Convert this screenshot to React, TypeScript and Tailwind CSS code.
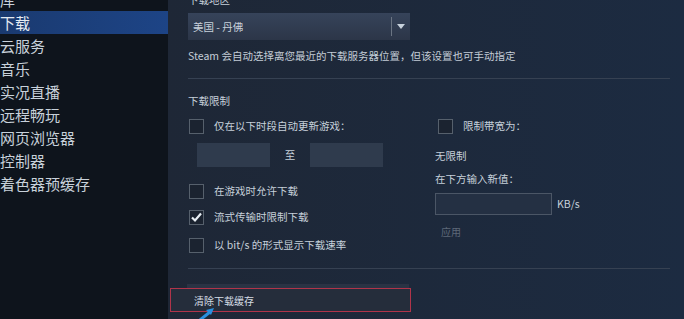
import React from "react";

const font = { fontFamily: '"Noto Sans CJK SC", "Noto Sans", sans-serif' };

function Box({ checked = false }: { checked?: boolean }) {
  return (
    <div className="w-[15px] h-[15px] border border-[#56606c] bg-[#1b2330] flex items-center justify-center shrink-0">
      {checked && (
        <svg width="13" height="13" viewBox="0 0 13 13">
          <path d="M2 6.5 L5 9.5 L11 2.5" stroke="#e8eef3" strokeWidth="2.2" fill="none" />
        </svg>
      )}
    </div>
  );
}

export default function App() {
  const side = ["库", "下载", "云服务", "音乐", "实况直播", "远程畅玩", "网页浏览器", "控制器", "着色器预缓存"];
  return (
    <div className="w-[684px] h-[319px] overflow-hidden flex bg-[#1d2635]" style={font}>
      <div className="w-[168px] h-full bg-[#0e141c] overflow-hidden shrink-0">
        <div className="-mt-[12px] flex flex-col">
          {side.map((s, i) => (
            <div
              key={s}
              className={
                "h-[23px] leading-[23px] text-[15px] text-[#c8d1da] whitespace-nowrap " +
                (i === 1 ? "bg-gradient-to-r from-[#1a3a70] to-[#1d4486] text-[#e4ebf2]" : "")
              }
            >
              {s}
            </div>
          ))}
        </div>
      </div>
      <div className="flex-1 h-full relative bg-gradient-to-r from-[#1e2736] to-[#1c2b41] pl-[20px] pr-[14px] text-[#c6d0da] text-[10.5px]">
        <div className="-mt-[9px] leading-[18px] text-[#c6d0da]">下载地区</div>
        <div className="mt-[4px] w-[222px] h-[27px] bg-gradient-to-b from-[#36435a] to-[#2c3648] flex items-center">
          <div className="flex-1 pl-[5px] text-[#c8d2dc]">美国 - 丹佛</div>
          <div className="w-[1px] h-[19px] bg-[#6b7583]" />
          <div className="w-[18px] flex justify-center">
            <svg width="8" height="5" viewBox="0 0 8 5"><path d="M0 0 L8 0 L4 5 Z" fill="#c8d2dc" /></svg>
          </div>
        </div>
        <div className="mt-[8px] leading-[16px] text-[#c3ccd6]">Steam 会自动选择离您最近的下载服务器位置，但该设置也可手动指定</div>
        <div className="mt-[14px] h-[1px] bg-[#364152] w-[482px]" />
        <div className="mt-[13px] leading-[18px]">下载限制</div>
        <div className="flex mt-[8px]">
          <div className="w-[249px]">
            <div className="flex items-center gap-[10px] ml-[1px] h-[16px]">
              <Box />
              <span>仅在以下时段自动更新游戏：</span>
            </div>
            <div className="flex items-center mt-[9px] ml-[9px] h-[24px]">
              <div className="w-[73px] h-[24px] bg-[#2f3b4d]" />
              <div className="w-[40px] text-center">至</div>
              <div className="w-[73px] h-[24px] bg-[#2f3b4d]" />
            </div>
            <div className="flex items-center gap-[10px] ml-[1px] mt-[16px] h-[16px]">
              <Box />
              <span>在游戏时允许下载</span>
            </div>
            <div className="flex items-center gap-[10px] ml-[1px] mt-[10px] h-[16px]">
              <Box checked />
              <span>流式传输时限制下载</span>
            </div>
            <div className="flex items-center gap-[10px] ml-[1px] mt-[12px] h-[16px]">
              <Box />
              <span>以 bit/s 的形式显示下载速率</span>
            </div>
          </div>
          <div>
            <div className="flex items-center gap-[10px] ml-[1px] h-[16px]">
              <Box />
              <span>限制带宽为：</span>
            </div>
            <div className="mt-[14px] leading-[16px] -ml-[2px]">无限制</div>
            <div className="mt-[7px] leading-[16px] -ml-[2px]">在下方输入新值：</div>
            <div className="flex items-center mt-[6px] -ml-[2px]">
              <div className="w-[117px] h-[22px] border border-[#4b5666] bg-[#243043]" />
              <span className="ml-[5px]">KB/s</span>
            </div>
            <div className="mt-[9px] ml-[4px] text-[10px] text-[#5d6878]">应用</div>
          </div>
        </div>
        <div className="mt-[15px] h-[1px] bg-[#364152] w-[482px]" />
        <div className="absolute left-[19px] top-[284px] w-[222px] h-[6px] bg-[#2a3344]" />
        <div className="absolute left-[2px] top-[288px] w-[241px] h-[24px] border-[1.5px] border-[#b0344a] bg-[#252d3b] flex items-center">
          <span className="ml-[23px] text-[10px] text-[#d5dde5]">清除下载缓存</span>
        </div>
        <svg className="absolute left-[30px] top-[306px]" width="20" height="14" viewBox="0 0 20 14">
          <path d="M2 14 L12 6" stroke="#2a8fe0" strokeWidth="3" />
          <path d="M8 4 L16 2 L13 9 Z" fill="#2a8fe0" />
        </svg>
      </div>
    </div>
  );
}
